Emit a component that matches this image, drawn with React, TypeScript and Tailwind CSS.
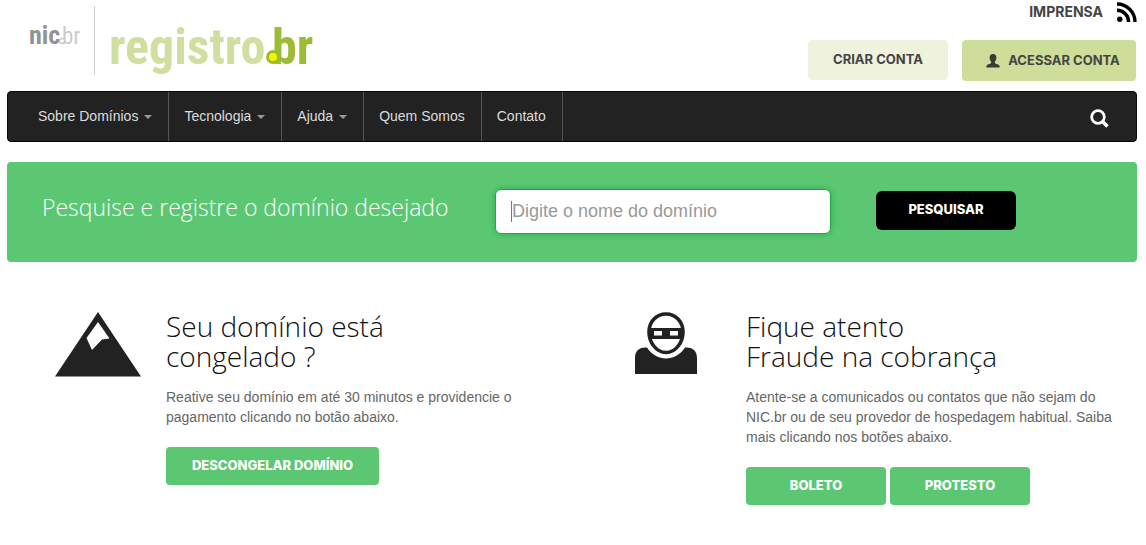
import { ReactNode } from 'react';

interface MenuItem {
  label: string;
  dropdown?: boolean;
}

const menuItems: MenuItem[] = [
  { label: 'Sobre Domínios', dropdown: true },
  { label: 'Tecnologia', dropdown: true },
  { label: 'Ajuda', dropdown: true },
  { label: 'Quem Somos' },
  { label: 'Contato' },
];

function NicLogo() {
  return (
    <svg width="56" height="64" viewBox="0 0 56 64" aria-label="nic.br" className="font-['Liberation_Sans_Narrow','Roboto_Condensed','Liberation_Sans',sans-serif] font-bold">
      <text x="0" y="38" fontSize="26" fill="#929292">nic</text>
      <text x="33" y="38" fontSize="23" fill="#cbcbcb" fontWeight="400">br</text>
      <circle cx="33" cy="35" r="2.500" fill="#fff" stroke="#cbcbcb" strokeWidth="1.500" />
    </svg>
  );
}

function RegistroLogo() {
  return (
    <svg width="212" height="70" viewBox="0 0 212 70" aria-label="registro.br" className="font-['Liberation_Sans_Narrow','Roboto_Condensed','Liberation_Sans',sans-serif] font-bold">
      <text x="0" y="58" fontSize="50" fill="#d0dfa0">registro</text>
      <text x="163" y="58" fontSize="50" fill="#9cbc35">br</text>
      <circle cx="164" cy="51" r="5.500" fill="#f7f300" stroke="#9cbc35" strokeWidth="3" />
    </svg>
  );
}

function RssIcon() {
  return (
    <svg width="20" height="20" viewBox="0 0 20 20" fill="none" stroke="#000" strokeWidth="3.4" aria-hidden="true">
      <circle cx="2.8" cy="17.2" r="2.7" fill="#000" stroke="none" />
      <path d="M0 8.3A11.5 11.5 0 0 1 11.6 20" />
      <path d="M0 2A18 18 0 0 1 18 20" />
    </svg>
  );
}

function UserIcon() {
  return (
    <svg width="14" height="14" viewBox="0 0 14 14" fill="#3b3b35" aria-hidden="true">
      <path d="M7 0C9.3 0 10.4 1.6 10.4 3.8C10.4 5.6 9.8 6.8 8.9 7.6V9C9.2 10 13.6 10.2 13.6 12.2V13.5H.4V12.2C.4 10.2 4.8 10 5.1 9V7.6C4.2 6.8 3.6 5.6 3.6 3.8C3.6 1.6 4.7 0 7 0Z" />
    </svg>
  );
}

function SearchIcon() {
  return (
    <svg width="20" height="20" viewBox="0 0 20 20" fill="none" stroke="#fff" aria-hidden="true">
      <circle cx="9" cy="8" r="6.3" strokeWidth="2.8" />
      <path d="M13.500 12.500L18.500 17.500" strokeWidth="3.6" />
    </svg>
  );
}

function MountainIcon() {
  return (
    <svg width="86" height="66" viewBox="0 0 86 66" aria-hidden="true">
      <path d="M43 1L86 65.500H0Z" fill="#222" />
      <path d="M43 11L31.5 27L37 39L47 28.5L54.5 27.500Z" fill="#fff" />
    </svg>
  );
}

function ThiefIcon() {
  return (
    <svg width="62" height="63" viewBox="0 0 62 63" aria-hidden="true">
      <path d="M0 63V47C0 39 5 36 12 36.5C17 44 24 47.500 31 47.500S45 44 50 36.500C57 36 62 39 62 47V63Z" fill="#222" />
      <path d="M31 3C41 3 48 11 48 21C48 31 41 41.500 31 41.500S14 31 14 21C14 11 21 3 31 3Z" fill="#fff" stroke="#222" strokeWidth="3.600" />
      <path d="M14 17H48V28H14Z" fill="#222" />
      <path d="M19 20H27V24.500H19ZM35 20H43V24.500H35Z" fill="#fff" />
    </svg>
  );
}

function GreenButton({ children, className }: { children: ReactNode; className: string }) {
  return (
    <button type="button" className={`h-[38px] rounded bg-[#5cc773] font-['Inter',sans-serif] text-[13px] font-extrabold text-white ${className}`}>
      {children}
    </button>
  );
}

interface NoticeProps {
  icon: ReactNode;
  title: ReactNode;
  text: string;
  children: ReactNode;
}

function Notice({ icon, title, text, children }: NoticeProps) {
  return (
    <section className="flex">
      <div className="w-[111px] shrink-0">{icon}</div>
      <div>
        <h2 className="font-['Open_Sans',sans-serif] text-[28px] leading-[30px] font-light text-[#111]">{title}</h2>
        <p className="mt-4 text-sm leading-5 text-[#666]">{text}</p>
        <div className="mt-5 flex gap-1">{children}</div>
      </div>
    </section>
  );
}

export default function App() {
  return (
    <div className="bg-white pr-[9px] pl-[7px] font-['Liberation_Sans',Arial,sans-serif]">
      <header className="flex justify-between">
        <a href="#" className="flex pt-[6px] pl-[22px]">
          <NicLogo />
          <span className="ml-[9px] h-[69px] w-px bg-[#d0d0d4]" />
          <span className="ml-[14px]"><RegistroLogo /></span>
        </a>
        <div className="flex flex-col items-end font-['Inter',sans-serif] text-[13px] font-bold text-[#444]">
          <div className="flex items-center gap-[14px] pt-[2px]">
            <a href="#" className="text-sm">IMPRENSA</a>
            <a href="#" aria-label="RSS"><RssIcon /></a>
          </div>
          <div className="mt-[18px] flex items-start gap-[14px] pr-px">
            <button type="button" className="h-10 w-[140px] rounded bg-[#eff3de]">CRIAR CONTA</button>
            <button type="button" className="flex h-[41px] w-[174px] items-center justify-center gap-2 rounded bg-[#cede9a] pl-2">
              <UserIcon />
              ACESSAR CONTA
            </button>
          </div>
        </div>
      </header>

      <nav className="mt-[10px] flex h-[51px] items-stretch justify-between rounded border border-[#080808] bg-[#222] pl-[15px]">
        <ul className="flex">
          {menuItems.map((item) => (
            <li key={item.label} className="flex border-r border-[#555]">
              <a href="#" className="flex items-center pr-4 pb-[2px] pl-[15px] text-sm text-[#ddd]">
                {item.label}
                {item.dropdown && <span className="mt-[2px] ml-[6px] border-x-4 border-t-4 border-x-transparent border-t-[#999]" />}
              </a>
            </li>
          ))}
        </ul>
        <button type="button" aria-label="Buscar" className="px-[27px] pt-1"><SearchIcon /></button>
      </nav>

      <form className="mt-5 flex h-[100px] items-center rounded bg-[#5cc773] pb-[2px] pl-[35px]">
        <label htmlFor="domain" className="w-[453px] shrink-0 pb-2 font-['Open_Sans',sans-serif] text-[23px] font-light text-white">
          Pesquise e registre o domínio desejado
        </label>
        <div className="relative">
          <input
            id="domain"
            type="text"
            placeholder="Digite o nome do domínio"
            className="peer block h-[45px] w-[336px] rounded-md border border-[#24a844] bg-white px-4 text-lg shadow-[0_0_6px_#24b044] outline-none placeholder:text-[#999]"
          />
          <span className="pointer-events-none absolute top-3 left-4 h-[21px] w-px bg-[#777] peer-focus:hidden" />
        </div>
        <button type="button" className="mb-[2px] ml-[45px] h-[39px] w-[140px] rounded-md bg-black font-['Inter',sans-serif] text-[13px] font-extrabold text-white">
          PESQUISAR
        </button>
      </form>

      <main className="mt-[49px] grid grid-cols-2 gap-x-[84px] pr-[6px] pl-12">
        <Notice
          icon={<MountainIcon />}
          title={<>Seu domínio está<br />congelado ?</>}
          text="Reative seu domínio em até 30 minutos e providencie o pagamento clicando no botão abaixo."
        >
          <GreenButton className="w-[213px]">DESCONGELAR DOMÍNIO</GreenButton>
        </Notice>
        <Notice
          icon={<ThiefIcon />}
          title={<>Fique atento<br />Fraude na cobrança</>}
          text="Atente-se a comunicados ou contatos que não sejam do NIC.br ou de seu provedor de hospedagem habitual. Saiba mais clicando nos botões abaixo."
        >
          <GreenButton className="w-[140px]">BOLETO</GreenButton>
          <GreenButton className="w-[140px]">PROTESTO</GreenButton>
        </Notice>
      </main>
    </div>
  );
}
